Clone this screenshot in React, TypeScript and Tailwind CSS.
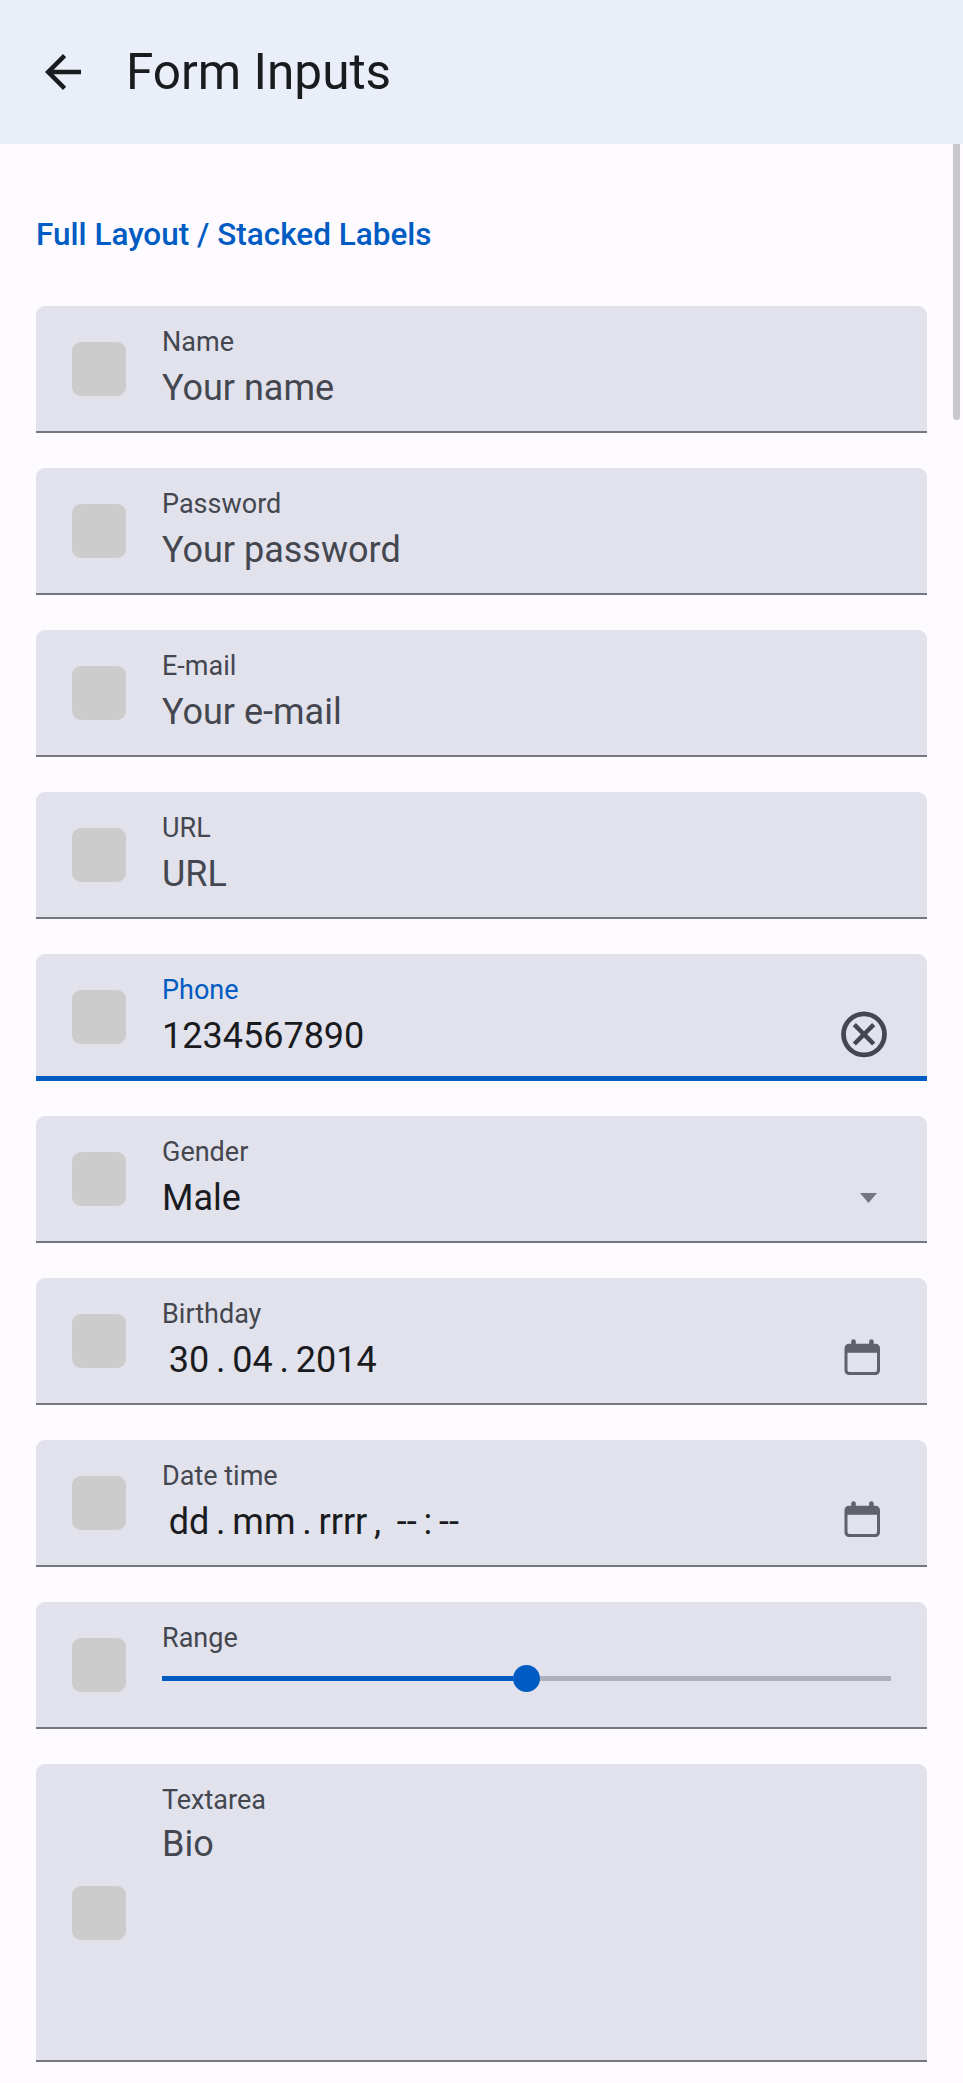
import React from "react";

type FieldProps = {
  label: string;
  focused?: boolean;
  tall?: boolean;
  trailing?: React.ReactNode;
  children: React.ReactNode;
};

function Field({ label, focused, tall, trailing, children }: FieldProps) {
  return (
    <li
      className={`flex rounded-t-[9px] bg-[#e1e2ec] px-9 ${tall ? "h-[298px]" : "h-[127px]"} ${
        focused ? "border-b-[5px] border-[#005bc3]" : "border-b-2 border-[#74777f]"
      }`}
    >
      <div className={`size-[54px] shrink-0 rounded-[9px] bg-[#cccccc] ${tall ? "mt-[122px]" : "mt-9"}`} />
      <div className="ml-9 flex-1 pt-[18px]">
        <div className={`text-[27px] leading-9 ${focused ? "text-[#005bc3]" : "text-[#44474f]"}`}>{label}</div>
        {children}
      </div>
      {trailing}
    </li>
  );
}

function Placeholder({ children }: { children: React.ReactNode }) {
  return <div className="text-[36px] leading-[56px] text-[#44474f]">{children}</div>;
}

function Value({ children }: { children: React.ReactNode }) {
  return <div className="text-[36px] leading-[56px] text-[#1a1b1f]">{children}</div>;
}

function DateParts({ parts }: { parts: string[] }) {
  return (
    <div className="flex pl-[4.5px] text-[36px] leading-[56px] text-[#1a1b1f]">
      {parts.map((part, i) => (
        <span key={i} className={/^[.:,]/.test(part) ? "px-[4.5px] whitespace-pre" : "px-[2.25px]"}>
          {part}
        </span>
      ))}
    </div>
  );
}

function CalendarIcon() {
  return (
    <svg className="mt-[61px] mr-[11px] h-[36px] w-[36px]" viewBox="0 0 36 36" fill="#5f626a">
      <path
        fillRule="evenodd"
        d="M5 4.8H31.5A4.5 4.5 0 0 1 36 9.3V31.5A4.5 4.5 0 0 1 31.5 36H5A4.5 4.5 0 0 1 0.5 31.5V9.3A4.5 4.5 0 0 1 5 4.8ZM3.5 13.8V31A2 2 0 0 0 5.5 33H31A2 2 0 0 0 33 31V13.8Z"
      />
      <rect x="7.2" y="0.2" width="4.6" height="8" rx="2.3" />
      <rect x="25.1" y="0.2" width="4.6" height="8" rx="2.3" />
    </svg>
  );
}

function ClearIcon() {
  return (
    <svg className="mt-[53px] h-[54px] w-[54px]" viewBox="0 -0.15 24 24" fill="#44474f">
      <circle cx="12" cy="12" r="9.1" fill="none" stroke="#44474f" strokeWidth="2.1" />
      <path d="M15.59 7L12 10.59 8.41 7 7 8.41 10.59 12 7 15.59 8.41 17 12 13.41 15.59 17 17 15.59 13.41 12 17 8.41z" />
    </svg>
  );
}

export default function App() {
  return (
    <div className="relative h-[2083px] w-full overflow-hidden bg-[#fdfbff] font-['Roboto',sans-serif]">
      <header className="flex h-36 items-center bg-[#e9eef9] pl-9 text-[#1a1b1f]">
        <svg className="size-[54px]" viewBox="0 0 24 24" fill="currentColor">
          <path d="M20 11H7.83l5.59-5.59L12 4l-8 8 8 8 1.41-1.41L7.83 13H20v-2z" />
        </svg>
        <h1 className="ml-9 text-[49.5px] leading-[144px] font-normal">Form Inputs</h1>
      </header>
      <div className="absolute top-36 right-[3px] h-[276px] w-[7px] rounded-b-full bg-[#c9c9cb]" />
      <main className="px-9 pt-[68px]">
        <h2 className="text-[31.5px] leading-[45px] font-medium text-[#005bc3]">Full Layout / Stacked Labels</h2>
        <ul className="mt-[49px] flex flex-col gap-[35px]">
          <Field label="Name">
            <Placeholder>Your name</Placeholder>
          </Field>
          <Field label="Password">
            <Placeholder>Your password</Placeholder>
          </Field>
          <Field label="E-mail">
            <Placeholder>Your e-mail</Placeholder>
          </Field>
          <Field label="URL">
            <Placeholder>URL</Placeholder>
          </Field>
          <Field label="Phone" focused trailing={<ClearIcon />}>
            <Value>1234567890</Value>
          </Field>
          <Field
            label="Gender"
            trailing={
              <svg className="mt-[77px] mr-[14px] h-[10px] w-[17px]" viewBox="0 0 17 10">
                <path d="M0 0H17L8.5 10Z" fill="#74777f" />
              </svg>
            }
          >
            <Value>Male</Value>
          </Field>
          <Field label="Birthday" trailing={<CalendarIcon />}>
            <DateParts parts={["30", ".", "04", ".", "2014"]} />
          </Field>
          <Field label="Date time" trailing={<CalendarIcon />}>
            <DateParts parts={["dd", ".", "mm", ".", "rrrr", ", ", "--", ":", "--"]} />
          </Field>
          <Field label="Range">
            <div className="mt-[9px] flex h-[27px] items-center">
              <div className="h-[5px] w-[351px] bg-[#005bc3]" />
              <div className="size-[27px] rounded-full bg-[#005bc3]" />
              <div className="h-[5px] flex-1 bg-[#aeb1bb]" />
            </div>
          </Field>
          <Field label="Textarea" tall>
            <div className="text-[36px] leading-[53px] text-[#44474f]">Bio</div>
          </Field>
        </ul>
      </main>
    </div>
  );
}
